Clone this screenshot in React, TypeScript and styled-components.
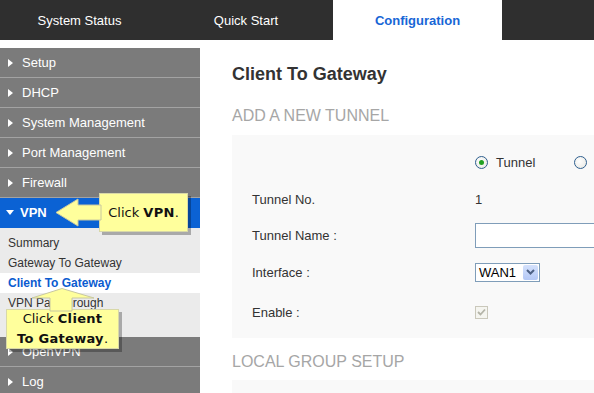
import React from "react";
import styled, { createGlobalStyle } from "styled-components";

const GlobalStyle = createGlobalStyle`
  html, body {
    margin: 0;
    padding: 0;
    background: #ffffff;
    font-family: "Liberation Sans", Arial, sans-serif;
  }
  #root {
    width: 594px;
    height: 393px;
    overflow: hidden;
  }
`;

const Page = styled.div`
  width: 594px;
  height: 393px;
  overflow: hidden;
  display: flex;
  flex-direction: column;
`;

const TopBar = styled.div`
  height: 40px;
  background: #2f2f2f;
  display: flex;
  flex-shrink: 0;
`;

const Tab = styled.div<{ $active?: boolean; $w: number }>`
  box-sizing: border-box;
  width: ${(p) => p.$w}px;
  flex-shrink: 0;
  display: flex;
  align-items: center;
  justify-content: center;
  font-size: 13px;
  color: ${(p) => (p.$active ? "#1766d6" : "#ffffff")};
  font-weight: ${(p) => (p.$active ? "bold" : "normal")};
  background: ${(p) => (p.$active ? "#ffffff" : "transparent")};
  padding-right: ${(p) => (p.$active ? 0 : 8)}px;
`;

const Body = styled.div`
  position: relative;
  display: flex;
  margin-top: 8px;
  flex: 1;
  min-height: 0;
`;

const Sidebar = styled.div`
  width: 200px;
  flex-shrink: 0;
  background: #7b7b7b;
  display: flex;
  flex-direction: column;
  overflow: hidden;
`;

const MenuItem = styled.div<{ $open?: boolean }>`
  height: 29px;
  flex-shrink: 0;
  border-bottom: 1px solid ${(p) => (p.$open ? "#0b62d4" : "#a3a3a3")};
  background: ${(p) => (p.$open ? "#0b62d4" : "transparent")};
  display: flex;
  align-items: center;
  padding-left: ${(p) => (p.$open ? 6 : 8)}px;
  gap: ${(p) => (p.$open ? 6 : 9)}px;
  color: #ffffff;
  font-size: 13px;
  font-weight: ${(p) => (p.$open ? "bold" : "normal")};
`;

const ArrowRight = styled.span`
  width: 0;
  height: 0;
  border-left: 5px solid #ffffff;
  border-top: 4px solid transparent;
  border-bottom: 4px solid transparent;
`;

const ArrowDown = styled.span`
  width: 0;
  height: 0;
  border-top: 5px solid #ffffff;
  border-left: 4px solid transparent;
  border-right: 4px solid transparent;
`;

const SubMenu = styled.div`
  flex-shrink: 0;
  background: #ebebeb;
  padding: 5px 0 4px;
  display: flex;
  flex-direction: column;
`;

const SubItem = styled.div<{ $selected?: boolean }>`
  height: 20px;
  display: flex;
  align-items: center;
  padding-left: 8px;
  font-size: 12px;
  color: ${(p) => (p.$selected ? "#0b5bd0" : "#333333")};
  font-weight: ${(p) => (p.$selected ? "bold" : "normal")};
  background: ${(p) => (p.$selected ? "#ffffff" : "transparent")};
`;

const Main = styled.div`
  flex: 1;
  min-width: 0;
  padding: 16px 0 0 32px;
  overflow: hidden;
`;

const Title = styled.h1`
  margin: 0 0 22px;
  font-size: 18px;
  line-height: 20px;
  font-weight: bold;
  color: #333333;
`;

const SectionHead = styled.div<{ $gap: number }>`
  font-size: 16px;
  line-height: 20px;
  color: #a6a6a6;
  margin-bottom: ${(p) => p.$gap}px;
`;

const Panel = styled.div<{ $mb?: number }>`
  background: #f9f9f9;
  padding: 8px 0 5px 20px;
  margin-bottom: ${(p) => p.$mb ?? 0}px;
  overflow: hidden;
`;

const Row = styled.div<{ $h: number }>`
  height: ${(p) => p.$h}px;
  display: grid;
  grid-template-columns: 223px 1fr;
  align-items: center;
  font-size: 13px;
  color: #333333;
`;

const Label = styled.span``;

const Value = styled.div`
  display: flex;
  align-items: center;
  white-space: nowrap;
`;

const RadioOption = styled.label`
  display: flex;
  align-items: center;
  gap: 8px;
  width: 99px;
  flex-shrink: 0;
  color: #333333;
`;

const Radio = styled.span<{ $checked?: boolean }>`
  box-sizing: border-box;
  width: 13px;
  height: 13px;
  border-radius: 50%;
  border: 1px solid #2f5f8f;
  background: radial-gradient(circle at 40% 40%, #ffffff 0%, #e6e6e0 100%);
  display: flex;
  align-items: center;
  justify-content: center;
  &::after {
    content: "";
    display: ${(p) => (p.$checked ? "block" : "none")};
    width: 5px;
    height: 5px;
    border-radius: 50%;
    background: #21a121;
  }
`;

const TextInput = styled.div`
  width: 160px;
  height: 23px;
  border: 1px solid #7f9db9;
  background: #ffffff;
  flex-shrink: 0;
`;

const Select = styled.div`
  box-sizing: border-box;
  width: 65px;
  height: 19px;
  border: 1px solid #7f9db9;
  background: #ffffff;
  display: flex;
  align-items: center;
  justify-content: space-between;
  padding: 0 1px 0 3px;
  font-size: 13px;
  color: #000000;
`;

const SelectButton = styled.span`
  width: 15px;
  height: 15px;
  border-radius: 2px;
  background: linear-gradient(#d4e1fc, #b4c8f6);
  display: flex;
  align-items: center;
  justify-content: center;
`;

const Checkbox = styled.span`
  box-sizing: border-box;
  width: 13px;
  height: 13px;
  border: 1px solid #cac8bb;
  background: #f5f5f0;
  display: flex;
  align-items: center;
  justify-content: center;
`;

const Callout = styled.div<{ $l: number; $t: number; $w: number; $h: number }>`
  position: absolute;
  left: ${(p) => p.$l}px;
  top: ${(p) => p.$t}px;
  width: ${(p) => p.$w}px;
  height: ${(p) => p.$h}px;
  box-sizing: border-box;
  background: #ffff9c;
  border: 1px solid #d8d8a8;
  box-shadow: 3px 3px 0 rgba(0, 0, 0, 0.28);
  display: flex;
  flex-direction: column;
  align-items: center;
  justify-content: center;
  font-family: "DejaVu Sans", Verdana, sans-serif;
  font-size: 13px;
  line-height: 20px;
  color: #111111;
  z-index: 2;
  b {
    letter-spacing: 0.3px;
  }
`;

const CalloutArrow = styled.svg<{ $l: number; $t: number }>`
  position: absolute;
  left: ${(p) => p.$l}px;
  top: ${(p) => p.$t}px;
  overflow: visible;
  z-index: 3;
`;

const menuTop = ["Setup", "DHCP", "System Management", "Port Management", "Firewall"];
const vpnSub = ["Summary", "Gateway To Gateway", "Client To Gateway", "VPN Passthrough", "PPTP Server"];
const menuBottom = ["OpenVPN", "Log"];

export default function App() {
  return (
    <Page>
      <GlobalStyle />
      <TopBar>
        <Tab $w={167}>System Status</Tab>
        <Tab $w={166}>Quick Start</Tab>
        <Tab $w={169} $active>
          Configuration
        </Tab>
      </TopBar>
      <Body>
        <Sidebar>
          {menuTop.map((m) => (
            <MenuItem key={m}>
              <ArrowRight />
              {m}
            </MenuItem>
          ))}
          <MenuItem $open>
            <ArrowDown />
            VPN
          </MenuItem>
          <SubMenu>
            {vpnSub.map((s) => (
              <SubItem key={s} $selected={s === "Client To Gateway"}>
                {s}
              </SubItem>
            ))}
          </SubMenu>
          {menuBottom.map((m) => (
            <MenuItem key={m}>
              <ArrowRight />
              {m}
            </MenuItem>
          ))}
        </Sidebar>

        <Main>
          <Title>Client To Gateway</Title>
          <SectionHead $gap={9}>ADD A NEW TUNNEL</SectionHead>
          <Panel $mb={14}>
            <Row $h={38}>
              <Label />
              <Value>
                <RadioOption>
                  <Radio $checked />
                  Tunnel
                </RadioOption>
                <RadioOption>
                  <Radio />
                  Group VPN
                </RadioOption>
              </Value>
            </Row>
            <Row $h={37}>
              <Label>Tunnel No.</Label>
              <Value>1</Value>
            </Row>
            <Row $h={35}>
              <Label>Tunnel Name :</Label>
              <Value>
                <TextInput />
              </Value>
            </Row>
            <Row $h={38}>
              <Label>Interface :</Label>
              <Value>
                <Select>
                  WAN1
                  <SelectButton>
                    <svg width="9" height="6" viewBox="0 0 9 6">
                      <path d="M1 1 L4.5 4.5 L8 1" fill="none" stroke="#4d6185" strokeWidth="2" />
                    </svg>
                  </SelectButton>
                </Select>
              </Value>
            </Row>
            <Row $h={42}>
              <Label>Enable :</Label>
              <Value>
                <Checkbox>
                  <svg width="9" height="8" viewBox="0 0 9 8">
                    <path d="M1 4 L3.5 6.5 L8 1.5" fill="none" stroke="#b4b4a8" strokeWidth="1.8" />
                  </svg>
                </Checkbox>
              </Value>
            </Row>
          </Panel>
          <SectionHead $gap={8}>LOCAL GROUP SETUP</SectionHead>
          <Panel>
            <Row $h={38}>
              <Label />
            </Row>
          </Panel>
        </Main>

        <CalloutArrow $l={55} $t={150} width="46" height="29" viewBox="0 0 46 29">
          <polygon
            points="1,14.5 23,1 23,7 46,7 46,22 23,22 23,28"
            fill="#ffff9c"
            stroke="#c8c8a0"
            strokeWidth="1"
          />
        </CalloutArrow>
        <Callout $l={99} $t={145} $w={89} $h={39}>
          <span>
            Click <b>VPN</b>.
          </span>
        </Callout>

        <CalloutArrow $l={31} $t={240} width="64" height="23" viewBox="0 0 64 23">
          <polygon
            points="31,0.5 63,10 41,10 41,23 19,23 19,10 1,10"
            fill="#ffff9c"
            stroke="#c8c8a0"
            strokeWidth="1"
          />
        </CalloutArrow>
        <Callout $l={6} $t={261} $w={113} $h={40}>
          <span>
            Click <b>Client</b>
          </span>
          <span>
            <b>To Gateway</b>.
          </span>
        </Callout>
      </Body>
    </Page>
  );
}
